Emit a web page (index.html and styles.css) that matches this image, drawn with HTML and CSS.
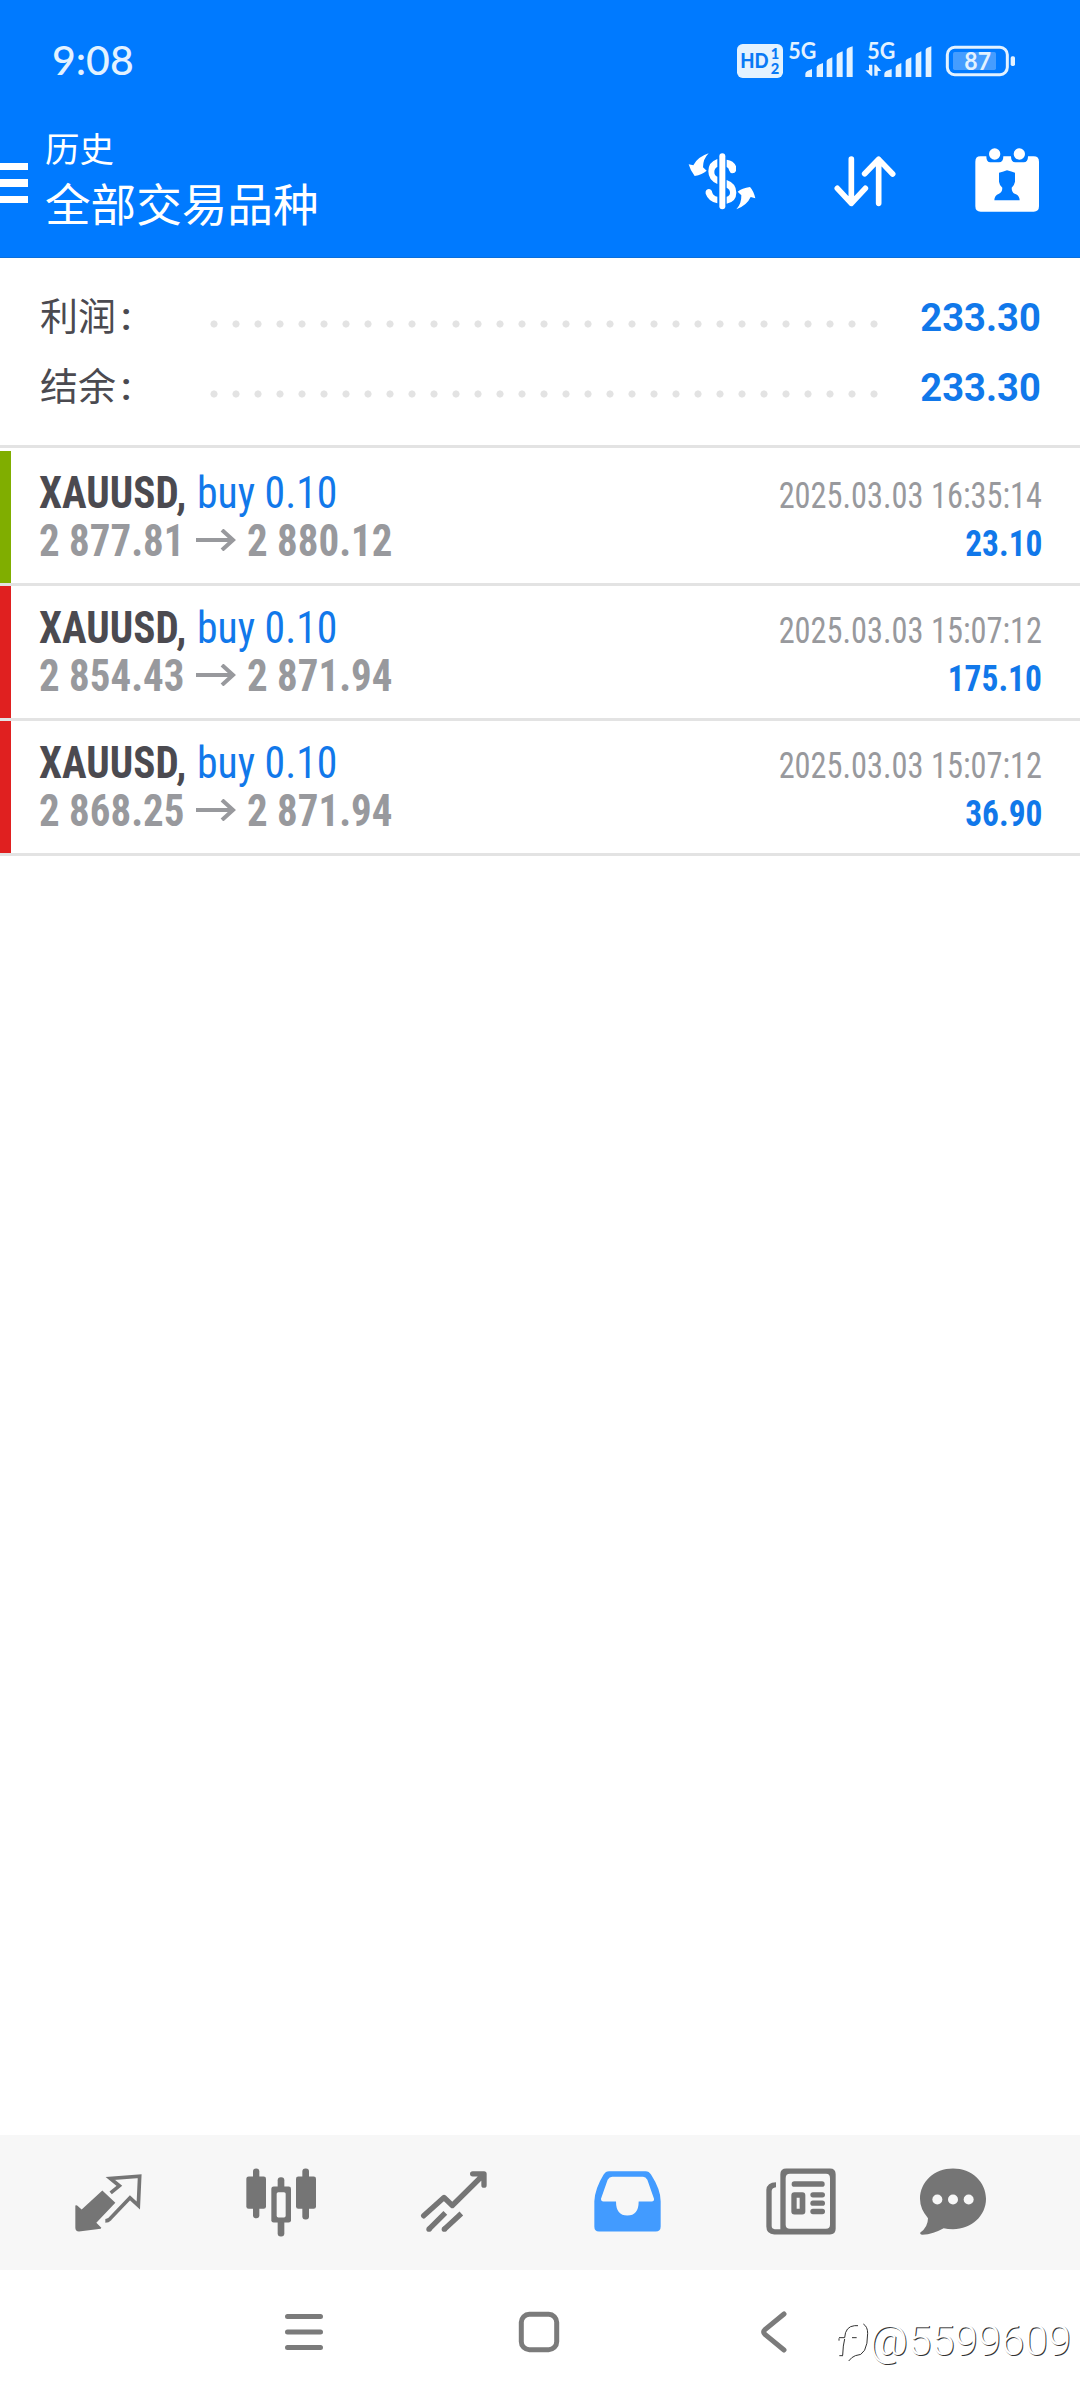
FILE: index.html
```html
<!DOCTYPE html>
<html lang="zh-CN">
<head>
<meta charset="utf-8">
<title>历史</title>
<link rel="stylesheet" href="styles.css">
</head>
<body>
<div class="screen">
  <header class="header">
    <div class="status">
      <span class="clock">9:08</span>
      <svg class="status-icons" viewBox="108 45 840 150" aria-hidden="true">
        <g fill="#e3f2ff">
          <rect x="111" y="72" width="138" height="102" rx="17"/>
          <path d="M316 171v-9q0-6 6-9l14-6v24zM350 171v-29q0-5 6-8l13-5v42zM380 171v-47q0-5 5-7l12-5v59zM410 171v-65q0-5 5-7l13-5v77zM440 171V90q0-5 5-7l13-4v92z"/>
          <path d="M553 171v-9q0-6 6-9l16-6v24zM587 171v-29q0-5 5-8l12-5v42zM617 171v-47q0-5 5-7l12-5v59zM647 171v-65q0-5 5-7l12-5v77zM677 171V90q0-5 5-7l12-4v92z"/>
          <path d="M507 134h10v33h-4l-17-16h11zM523 167v-33h5l16 19h-11v14z"/>
          <rect x="932" y="109" width="13" height="29" rx="5"/>
        </g>
        <rect x="742" y="82" width="180" height="82" rx="22" fill="none" stroke="#e3f2ff" stroke-width="9"/>
        <rect x="759" y="96" width="129" height="54" rx="5" fill="#459dff"/>
        <g class="status-text">
          <text class="heavy" x="121" y="145" font-size="61" textLength="85" lengthAdjust="spacingAndGlyphs">HD</text>
          <text class="heavy" x="212" y="116" font-size="44">1</text>
          <text class="heavy" x="212" y="162" font-size="44">2</text>
          <text x="265" y="118" font-size="66" textLength="84" lengthAdjust="spacingAndGlyphs">5G</text>
          <text x="502" y="118" font-size="66" textLength="84" lengthAdjust="spacingAndGlyphs">5G</text>
          <text x="793" y="150" font-size="72" textLength="80" lengthAdjust="spacingAndGlyphs">87</text>
        </g>
      </svg>
    </div>
    <div class="appbar">
      <div class="burger"><i></i><i></i><i></i></div>
      <div class="titles">
        <div class="subtitle">历史</div>
        <div class="title">全部交易品种</div>
      </div>
      <div class="actions">
        <svg viewBox="68 32 240 240" fill="#fff" aria-hidden="true">
          <rect x="177" y="69" width="18" height="168" rx="9"/>
          <path d="M171 86v24q-9 4-9 15t9 14v22q-27-11-27-38 0-28 27-37zM199 88q21 2 28 20v14q-3 7-11 7-6 0-9-8-2-9-8-11zM199 149q29 10 29 38 0 27-29 33v-21q10-3 10-12 0-10-10-15zM171 219q-27-6-35-29-2-12 9-14 9 0 11 11 3 9 15 12z"/>
          <path d="M145 69q-17 17-17 42l11 10q-13 12-36 16-13-16-18-35l14 3q12-25 46-36zM228 237q16-17 15-42l-11-11q13-11 37-14 11 12 16 34l-14-4q-11 25-43 37z"/>
        </svg>
        <svg viewBox="495 32 240 240" fill="none" stroke="#fff" stroke-width="17" stroke-linecap="round" stroke-linejoin="round" aria-hidden="true">
          <path d="M574 86v133M532 174l42 45 42-45M656 219V88M614 130l42-43 42 44"/>
        </svg>
        <svg viewBox="920 32 240 240" aria-hidden="true">
          <path fill="#fff" d="M960 78h18q0 18 12 18h26q13 0 13-18h23q0 18 13 18h25q13 0 13-18h17q16 0 16 16v134q0 16-16 16H961q-16 0-16-16V94q0-16 15-16z"/>
          <circle cx="1003" cy="71" r="17" fill="#fff"/><circle cx="1077" cy="71" r="17" fill="#fff"/>
          <path fill="#007aff" d="M1016 127q10-2 24-7 14 4 24 7v27q-2 11-10 18 0 14 9 18 15 5 15 20h-76q0-15 14-20 10-5 10-18-9-8-10-18z"/>
        </svg>
      </div>
    </div>
  </header>

  <section class="summary">
    <div class="sum-row"><span class="label">利润<b>:</b></span><span class="dots"></span><b class="value">233.30</b></div>
    <div class="sum-row"><span class="label">结余<b>:</b></span><span class="dots"></span><b class="value">233.30</b></div>
  </section>

  <main class="deals">
    <article class="deal deal-green">
      <div class="line"><span class="name"><b class="symbol">XAUUSD,</b><span class="side">buy 0.10</span></span><span class="date">2025.03.03 16:35:14</span></div>
      <div class="line"><span class="prices"><span class="price">2 877.81</span><svg viewBox="0 0 40 22" aria-hidden="true"><path d="M0 11h37M26 1l11 10-11 10"/></svg><span class="price">2 880.12</span></span><b class="profit">23.10</b></div>
    </article>
    <article class="deal deal-red">
      <div class="line"><span class="name"><b class="symbol">XAUUSD,</b><span class="side">buy 0.10</span></span><span class="date">2025.03.03 15:07:12</span></div>
      <div class="line"><span class="prices"><span class="price">2 854.43</span><svg viewBox="0 0 40 22" aria-hidden="true"><path d="M0 11h37M26 1l11 10-11 10"/></svg><span class="price">2 871.94</span></span><b class="profit">175.10</b></div>
    </article>
    <article class="deal deal-red">
      <div class="line"><span class="name"><b class="symbol">XAUUSD,</b><span class="side">buy 0.10</span></span><span class="date">2025.03.03 15:07:12</span></div>
      <div class="line"><span class="prices"><span class="price">2 868.25</span><svg viewBox="0 0 40 22" aria-hidden="true"><path d="M0 11h37M26 1l11 10-11 10"/></svg><span class="price">2 871.94</span></span><b class="profit">36.90</b></div>
    </article>
  </main>

  <nav class="tabs">
    <svg viewBox="84 127.5 240 240" aria-hidden="true">
      <path fill="#757575" d="M187 210l39 37-57 60 15 15-2 3-65 8q-11 0-11-11v-67q4-2 8 2l11 10z"/>
      <path fill="none" stroke="#757575" stroke-width="11" d="M212 217l26-21-27-22 88-7-4 88-25-23-60 63q-6 6-14 6"/>
    </svg>
    <svg viewBox="603 127.5 240 240" fill="#757575" aria-hidden="true">
      <rect x="639" y="144" width="19" height="149" rx="9"/><rect x="619" y="168" width="59" height="97" rx="7"/>
      <rect x="787" y="144" width="20" height="153" rx="9"/><rect x="768" y="168" width="60" height="97" rx="7"/>
      <rect x="713" y="170" width="20" height="178" rx="9"/><rect x="694" y="198" width="59" height="108" rx="7"/>
      <rect x="710" y="215" width="27" height="76" rx="5" fill="#f7f7f7"/>
    </svg>
    <svg viewBox="1122 127.5 240 240" fill="none" stroke="#757575" stroke-width="16" aria-hidden="true">
      <path stroke-linecap="round" stroke-linejoin="round" d="M1151 286l61-55 25 24 94-93M1298 160h34v34"/>
      <path d="M1216 277l-49 49M1264 279l-51 47"/><circle cx="1167" cy="326" r="8" fill="#757575" stroke="none"/><circle cx="1213" cy="326" r="8" fill="#757575" stroke="none"/>
    </svg>
    <svg viewBox="81 127.5 240 240" aria-hidden="true">
      <path fill="#429bff" fill-rule="evenodd" d="M147 152h110q10 0 16 10 29 45 29 80v76q0 15-15 15H117q-14 0-14-15v-76q2-38 28-80 6-10 16-10zm10 17q-9 0-14 9l-20 57q0 8 7 8h38q0 42 34 42 34 0 34-42h39q8 0 7-8l-20-57q-5-9-13-9z"/>
    </svg>
    <svg viewBox="600 127.5 240 240" fill="#757575" aria-hidden="true">
      <path fill-rule="evenodd" d="M679 144h131q17 0 17 17v164q0 17-17 17H643q-24-1-24-24V208q2-23 29-23v15q-13 1-13 12v104q0 10 9 10h17V161q0-17 18-17zm11 16q-13 0-13 13v140q0 12 13 12h108q12 0 12-12V173q0-13-12-13z"/>
      <rect x="695" y="182" width="99" height="17" rx="8"/>
      <path fill-rule="evenodd" d="M703 215h24q9 0 9 9v49q0 9-9 9h-24q-9 0-9-9v-49q0-9 9-9zm7 17v33h9v-33z"/>
      <rect x="751" y="215" width="44" height="16" rx="8"/><rect x="751" y="240" width="44" height="16" rx="8"/><rect x="751" y="265" width="44" height="16" rx="8"/>
    </svg>
    <svg viewBox="1056 127.5 240 240" aria-hidden="true">
      <path fill="#757575" d="M1179 144c56 0 99 40 99 91s-43 91-99 91q-16 0-28-3-30 17-64 20-8-1-6-7 23-17 23-43-24-27-24-58c0-51 43-91 99-91z"/>
      <g fill="#f7f7f7"><circle cx="1132" cy="237" r="15"/><circle cx="1179" cy="237" r="15"/><circle cx="1226" cy="237" r="15"/></g>
    </svg>
  </nav>

  <footer class="system">
    <svg viewBox="0 0 46 46" aria-hidden="true"><path d="M6.500 7.500h33M6.500 23h33M6.500 38.500h33"/></svg>
    <svg viewBox="0 0 46 46" aria-hidden="true"><rect x="5.300" y="5.300" width="35.400" height="35.400" rx="8"/></svg>
    <svg viewBox="0 0 46 46" aria-hidden="true"><path d="M33 5L14 20.500q-2.500 2.500 0 5L33 41"/></svg>
    <div class="mark">
      <svg viewBox="36 100 108 129" aria-hidden="true"><path d="M54 153h17q2-34 30-36h10M54 162v-7M71 157q-5 18-6 49M55 207h11M93 153h14M127 112q13 8 13 28 0 68-37 67-11 4-20 16"/></svg>
      <span>@5599609</span>
    </div>
  </footer>
</div>
</body>
</html>
```
FILE: styles.css
```css
* { box-sizing: border-box; }
body {
  margin: 0;
  background: #fff;
  font-family: Roboto, "Noto Sans CJK SC", sans-serif;
}
svg { display: block; flex: none; }
.screen {
  width: 1080px;
  height: 2400px;
  display: flex;
  flex-direction: column;
  overflow: hidden;
}

.header {
  height: 258px;
  background: #007aff;
  border-bottom: 1px solid #0a6fdc;
  color: #fff;
}
.status {
  height: 120px;
  padding: 35px 64px 0 52px;
  display: flex;
  justify-content: space-between;
  align-items: flex-start;
}
.clock {
  margin-top: 3px;
  font: 500 41px/44px Lato, sans-serif;
  color: #e3f2ff;
}
.status-icons { width: 280px; height: 50px; overflow: visible; }
.status-text {
  font-family: Lato, sans-serif;
  font-weight: 700;
  fill: #e3f2ff;
}
.heavy { font-weight: 900; fill: #0879f5; }
.appbar {
  display: flex;
  align-items: flex-start;
  padding-right: 33px;
}
.burger {
  width: 28px;
  margin: 42.500px 17px 0 0;
  display: flex;
  flex-direction: column;
  gap: 9px;
}
.burger i { height: 7.600px; background: #fff; }
.titles { flex: 1; font-family: "Noto Sans CJK SC", sans-serif; }
.subtitle { font-size: 34.500px; line-height: 55px; }
.title { font-size: 45.600px; line-height: 55px; }
.actions { display: flex; gap: 62px; padding-top: 20.500px; }
.actions svg { width: 80px; height: 80px; }

.summary {
  height: 190px;
  padding: 25px 39px 0;
  border-bottom: 3px solid #e3e3e3;
}
.sum-row { height: 70px; display: flex; align-items: center; }
.label {
  width: 171px;
  padding-left: 1px;
  font-size: 38px;
  line-height: 68px;
  height: 70px;
  color: #4b4a50;
}
.label b { margin-left: 5px; font-weight: 600; }
.dots {
  width: 682px;
  height: 22px;
  margin-top: 12px;
  margin-left: -7px;
  background: radial-gradient(circle at center, #e3e3e3 3.200px, transparent 3.900px) 0 0 / 22px 22px repeat-x;
}
.value {
  margin-left: auto;
  font-size: 39.500px;
  line-height: 70px;
  color: #1178ea;
  transform: scaleX(.965);
  transform-origin: right;
}

.deals { padding-top: 3px; flex: 1; }
.deal {
  height: 135px;
  padding: 18px 38px 0 39px;
  border-bottom: 3px solid #e3e3e3;
  background-size: 11px 100%;
  background-repeat: no-repeat;
  font-family: "Roboto Condensed", Roboto, sans-serif;
  font-stretch: 75%;
}
.deal-green { background-image: linear-gradient(#80ae00, #80ae00); }
.deal-red { background-image: linear-gradient(#e02020, #e02020); }
.line {
  height: 48px;
  line-height: 48px;
  display: flex;
  justify-content: space-between;
  align-items: baseline;
  white-space: nowrap;
}
.name { display: flex; font-size: 44px; color: #4b4a50; }
.symbol {
  width: 158px;
  transform: scaleX(.935);
  transform-origin: left;
}
.side {
  color: #1178ea;
  transform: scaleX(.947);
  transform-origin: left;
}
.prices {
  display: flex;
  font-size: 44px;
  font-weight: 700;
  color: #98999d;
}
.price {
  width: 157px;
  transform: scaleX(.93);
  transform-origin: left;
}
.prices svg {
  width: 40px;
  height: 22px;
  margin: 12px 11px 0 0;
  fill: none;
  stroke: #98999d;
  stroke-width: 4;
}
.date {
  font-size: 37px;
  color: #98999d;
  transform: scaleX(.875);
  transform-origin: right;
}
.profit {
  font-size: 36.500px;
  color: #1178ea;
  transform: scaleX(.915);
  transform-origin: right;
}

.tabs {
  height: 135px;
  padding-left: 21.500px;
  background: #f7f7f7;
  display: grid;
  grid-template-columns: repeat(5, 173px) 131px;
  place-items: center;
}
.tabs svg { width: 80px; height: 80px; }

.system {
  height: 130px;
  padding: 39px 9px 0 281px;
  display: flex;
  align-items: flex-start;
}
.system > svg {
  width: 46px;
  height: 46px;
  margin-right: 189px;
  fill: none;
  stroke: #7b7b7b;
  stroke-width: 5;
  stroke-linecap: round;
}
.system > svg:nth-child(3) { margin-right: 0; }
.mark {
  margin: 7px 0 0 auto;
  display: flex;
  align-items: center;
  color: #fff;
  font-size: 42px;
  font-weight: 300;
  line-height: 50px;
  text-shadow: 1px 1px 0 #333;
}
.mark svg {
  width: 36px;
  height: 43px;
  margin-right: 1px;
  fill: none;
  stroke: #333;
  stroke-width: 3;
}
```
